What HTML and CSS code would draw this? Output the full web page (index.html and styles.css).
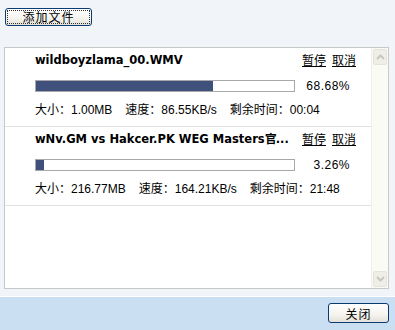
FILE: index.html
```html
<!DOCTYPE html>
<html lang="zh-CN">
<head>
    <meta charset="UTF-8">
    <title>上传文件</title>
    <link rel="stylesheet" href="styles.css">
</head>
<body>
    <div class="toolbar">
        <button class="xp-btn add-btn" type="button"><span class="focus">添加文件</span></button>
    </div>

    <div class="file-list">
        <div class="items">
            <div class="item">
                <div class="title-row">
                    <span class="name">wildboyzlama_00.WMV</span>
                    <span class="actions"><a href="#">暂停</a><a href="#">取消</a></span>
                </div>
                <div class="progress-row">
                    <div class="bar"><div class="fill" style="width: 68.68%"></div></div>
                    <span class="percent">68.68%</span>
                </div>
                <div class="info">
                    <span>大小：1.00MB</span>
                    <span>速度：86.55KB/s</span>
                    <span>剩余时间：00:04</span>
                </div>
            </div>
            <div class="item">
                <div class="title-row">
                    <span class="name">wNv.GM vs Hakcer.PK WEG Masters官...</span>
                    <span class="actions"><a href="#">暂停</a><a href="#">取消</a></span>
                </div>
                <div class="progress-row">
                    <div class="bar"><div class="fill" style="width: 3.26%"></div></div>
                    <span class="percent">3.26%</span>
                </div>
                <div class="info">
                    <span>大小：216.77MB</span>
                    <span>速度：164.21KB/s</span>
                    <span>剩余时间：21:48</span>
                </div>
            </div>
        </div>
        <div class="scrollbar">
            <div class="arrow">
                <svg width="9" height="6" viewBox="0 0 9 6"><path d="M1 5 L4.5 1.5 L8 5" fill="none" stroke="#c9c8bf" stroke-width="2"/></svg>
            </div>
            <div class="arrow">
                <svg width="9" height="6" viewBox="0 0 9 6"><path d="M1 1 L4.5 4.5 L8 1" fill="none" stroke="#c9c8bf" stroke-width="2"/></svg>
            </div>
        </div>
    </div>

    <div class="footer">
        <button class="xp-btn close-btn" type="button">关闭</button>
    </div>
</body>
</html>
```

FILE: styles.css
```css
body {
    margin: 0;
    width: 395px;
    height: 330px;
    background: #f1f5fa;
    font-family: "Liberation Sans", "Noto Sans CJK SC", sans-serif;
    font-size: 12px;
    color: #000;
    overflow: hidden;
}

.toolbar {
    padding: 8px 5px 0;
    height: 39px;
}

.xp-btn {
    box-sizing: border-box;
    padding: 0;
    border: 1px solid #0c3a72;
    border-radius: 3px;
    background: linear-gradient(#ffffff, #f4f3ee 60%, #e3e1d8);
    font-family: "Noto Sans CJK SC", sans-serif;
    font-size: 12px;
    color: #000;
    cursor: pointer;
}

.add-btn {
    width: 87px;
    height: 18px;
    display: flex;
    padding: 1px;
}

.add-btn .focus {
    flex: 1;
    border: 1px dotted #333;
    line-height: 12px;
    letter-spacing: 1px;
}

.file-list {
    display: flex;
    margin: 0 6px 0 4px;
    height: 242px;
    border: 1px solid #c8c8c8;
    background: #fff;
    box-sizing: border-box;
}

.items {
    flex: 1;
}

.item {
    padding: 4px 15px 8px 30px;
    border-bottom: 1px solid #e2e2e2;
}

.title-row {
    display: flex;
    height: 16px;
    line-height: 16px;
}

.name {
    flex: 1;
    font-family: "DejaVu Sans", sans-serif;
    font-weight: bold;
    font-size: 11.5px;
    white-space: nowrap;
    overflow: hidden;
}

.actions {
    display: flex;
    gap: 6px;
    font-family: "Noto Sans CJK SC", sans-serif;
    font-size: 12px;
    white-space: nowrap;
}

.actions a {
    color: #000;
    text-decoration: underline;
}

.progress-row {
    display: flex;
    align-items: center;
    margin-top: 12px;
    height: 12px;
}

.bar {
    box-sizing: border-box;
    width: 260px;
    height: 12px;
    border: 1px solid #a8a8a8;
    background: #fff;
}

.fill {
    height: 100%;
    background: #3f507c;
}

.percent {
    width: 55px;
    text-align: right;
    letter-spacing: 0.5px;
}

.info {
    display: flex;
    gap: 13px;
    margin-top: 10px;
    height: 16px;
    line-height: 16px;
    white-space: nowrap;
}

.scrollbar {
    width: 16px;
    display: flex;
    flex-direction: column;
    justify-content: space-between;
    background: #fbfbf6;
    border-left: 1px solid #f0f0ea;
}

.arrow {
    height: 14px;
    margin: 1px;
    border: 1px solid #e4e3dc;
    border-radius: 2px;
    background: #efeee7;
    display: flex;
    align-items: center;
    justify-content: center;
}

.footer {
    margin-top: 7px;
    height: 31px;
    border-top: 1px solid #fff;
    border-bottom: 2px solid #a9c2dc;
    background: #cbdff3;
    display: flex;
    justify-content: flex-end;
    padding: 6px 6px 0 0;
    box-sizing: content-box;
}

.close-btn {
    width: 61px;
    height: 20px;
    letter-spacing: 1px;
}
```
